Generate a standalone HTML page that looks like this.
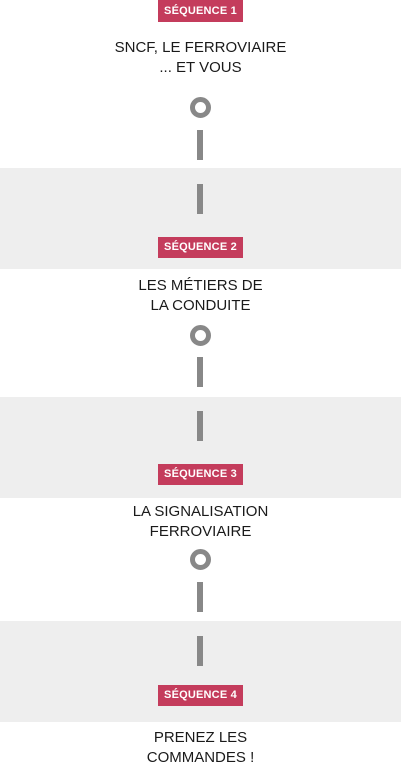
<!DOCTYPE html>
<html><head><meta charset="utf-8"><style>
body{margin:0;width:401px;height:772px;background:#fff;position:relative;overflow:hidden;font-family:"Liberation Sans",sans-serif}
.band{position:absolute;left:0;width:401px;background:#eeeeee}
.badge{position:absolute;left:158px;width:85px;height:21px;background:#c43c5c;color:#fff;font-weight:bold;font-size:11px;line-height:21px;text-align:center;letter-spacing:0.2px}
.bar{position:absolute;left:197px;width:6px;height:30px;background:#888}
.circ{position:absolute;left:190px;width:11px;height:11px;border:5px solid #888;border-radius:50%}
.t{position:absolute;left:0;width:401px;text-align:center;font-size:15px;line-height:20px;color:#1a1a1a}
</style></head><body>
<div class="band" style="top:168px;height:101px"></div>
<div class="band" style="top:397px;height:101px"></div>
<div class="band" style="top:621px;height:101px"></div>

<div class="badge" style="top:0px;height:22px;line-height:22px">SÉQUENCE 1</div>
<div class="t" style="top:38px">SNCF, LE FERROVIAIRE<br>... ET VOUS</div>
<div class="circ" style="top:97px"></div>
<div class="bar" style="top:130px"></div>
<div class="bar" style="top:184px"></div>

<div class="badge" style="top:237px">SÉQUENCE 2</div>
<div class="t" style="top:276px">LES MÉTIERS DE<br>LA CONDUITE</div>
<div class="circ" style="top:325px"></div>
<div class="bar" style="top:357px"></div>
<div class="bar" style="top:411px"></div>

<div class="badge" style="top:464px">SÉQUENCE 3</div>
<div class="t" style="top:502px">LA SIGNALISATION<br>FERROVIAIRE</div>
<div class="circ" style="top:549px"></div>
<div class="bar" style="top:582px"></div>
<div class="bar" style="top:636px"></div>

<div class="badge" style="top:685px">SÉQUENCE 4</div>
<div class="t" style="top:728px">PRENEZ LES<br>COMMANDES !</div>
</body></html>
